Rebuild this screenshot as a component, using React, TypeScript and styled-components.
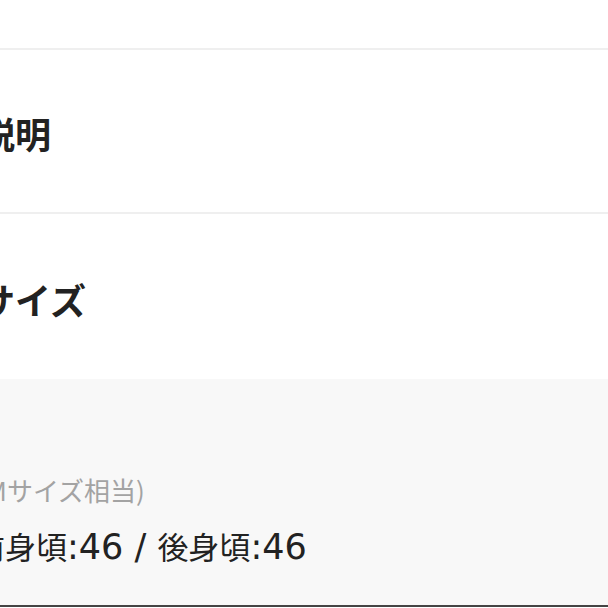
import React from "react";
import styled, { createGlobalStyle } from "styled-components";

const Global = createGlobalStyle`
  html, body {
    margin: 0;
    padding: 0;
    background: #ffffff;
    overflow: hidden;
    font-family: "Noto Sans CJK JP", "Noto Sans", "Liberation Sans", sans-serif;
  }
`;

const Page = styled.div`
  width: 608px;
  height: 608px;
  display: flex;
  flex-direction: column;
  overflow: hidden;
  background: #ffffff;
`;

const TopSpace = styled.div`
  height: 48px;
  background: #ffffff;
`;

const Section = styled.section<{ $top: number; $bottom: number }>`
  border-top: 2px solid #efefef;
  padding: ${(p) => p.$top}px 0 ${(p) => p.$bottom}px;
  background: #ffffff;
`;

const Heading = styled.h2`
  margin: 0 0 0 -129px;
  font-size: 36px;
  line-height: 36px;
  font-weight: 700;
  color: #222222;
  white-space: nowrap;
`;

const InfoBox = styled.div`
  background: #f8f8f8;
  padding: 98px 0 44px;
  border-bottom: 2px solid #444444;
  display: flex;
  flex-direction: column;
  gap: 27px;
`;

const Note = styled.p`
  margin: 0 0 0 -23px;
  font-size: 26px;
  line-height: 26px;
  color: #a3a3a3;
  white-space: nowrap;
`;

const Value = styled.p`
  margin: 0 0 0 -26px;
  height: 31px;
  font-size: 31px;
  line-height: 31px;
  color: #222222;
  white-space: nowrap;
`;

const Num = styled.span`
  font-family: "DejaVu Sans", "Liberation Sans", sans-serif;
  font-size: 35px;
  line-height: 31px;
`;

export default function App() {
  return (
    <>
      <Global />
      <Page>
        <TopSpace />
        <Section $top={65} $bottom={61}>
          <Heading>商品の説明</Heading>
        </Section>
        <Section $top={67} $bottom={62}>
          <Heading>商品のサイズ</Heading>
        </Section>
        <InfoBox>
          <Note>(Mサイズ相当)</Note>
          <Value>
            前身頃<Num>:46 / </Num>後身頃<Num>:46</Num>
          </Value>
        </InfoBox>
      </Page>
    </>
  );
}
